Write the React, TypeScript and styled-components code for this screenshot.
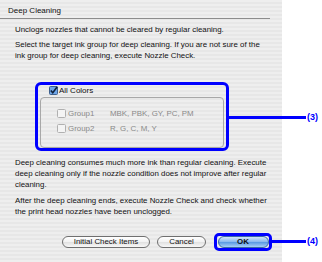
import styled, { createGlobalStyle } from "styled-components";

const GlobalStyle = createGlobalStyle`
    html, body {
        margin: 0;
        padding: 0;
        background: #ffffff;
    }
    body {
        font-family: "Liberation Sans", Arial, sans-serif;
    }
`;

const StyledPage = styled.div`
    position: relative;
    width: 322px;
    height: 262px;
    display: flex;
    background: #ffffff;
    overflow: hidden;
`;

const StyledDialog = styled.div`
    flex: 0 0 282px;
    height: 262px;
    background: repeating-linear-gradient(
        to bottom,
        #eeeeee 0px,
        #eeeeee 2px,
        #e7e7e7 2px,
        #e7e7e7 4px
    );
    color: #111;
    font-size: 7.9px;
`;

const StyledTitle = styled.div`
    height: 19px;
    margin-right: 12px;
    padding: 2px 0 0 8px;
    box-sizing: border-box;
    border-bottom: 1px solid #8c8c8c;
    display: flex;
    align-items: center;
    font-size: 8px;
`;

const StyledBody = styled.div`
    padding: 0 10px 0 15px;
`;

const StyledText = styled.p<{ $top: number }>`
    margin: ${(p) => p.$top}px 0 0 0;
    line-height: 11px;
    white-space: nowrap;
`;

const StyledHighlight = styled.div<{ $radius?: number }>`
    border: 3px solid #0000ff;
    border-radius: ${(p) => p.$radius ?? 6}px;
    box-sizing: border-box;
`;

const StyledColorBox = styled(StyledHighlight)`
    margin: 21px 0 0 20px;
    width: 194px;
    height: 69px;
    padding: 0 2px;
`;

const StyledAllRow = styled.div`
    display: flex;
    align-items: center;
    gap: 1px;
    padding-left: 9px;
    height: 11px;
    font-size: 8px;
`;

const StyledInnerGroup = styled.div`
    margin-top: 1px;
    height: 51px;
    border: 1px solid #a8a8a8;
    border-radius: 4px;
    box-sizing: border-box;
    padding: 11px 0 0 16px;
    display: flex;
    flex-direction: column;
    gap: 6px;
`;

const StyledGroupRow = styled.div`
    display: flex;
    align-items: center;
    height: 9px;
    color: #8a8a8a;
`;

const StyledGroupName = styled.span`
    width: 42px;
    margin-left: 2px;
`;

const StyledCallout = styled.div<{ $top: number; $left: number }>`
    position: absolute;
    top: ${(p) => p.$top}px;
    left: ${(p) => p.$left}px;
    height: 10px;
    display: flex;
    align-items: center;
    gap: 1px;
    color: #0000ff;
    font-family: "Liberation Sans", sans-serif;
    font-weight: bold;
    font-size: 9px;
`;

const StyledCalloutLine = styled.div<{ $width: number }>`
    width: ${(p) => p.$width}px;
    height: 3px;
    background: #0000ff;
`;

const StyledButtons = styled.div`
    margin-top: 16px;
    padding-left: 47px;
    display: flex;
    align-items: center;
`;

const StyledButton = styled.button<{ $primary?: boolean; $width: number; $gap?: number }>`
    flex: 0 0 auto;
    width: ${(p) => p.$width}px;
    height: 12px;
    margin-right: ${(p) => p.$gap ?? 0}px;
    padding: 0;
    border: 1px solid ${(p) => (p.$primary ? "#3b6aa3" : "#6f6f6f")};
    border-radius: 7px;
    font-family: inherit;
    font-size: 7.9px;
    font-weight: ${(p) => (p.$primary ? "bold" : "normal")};
    line-height: 10px;
    color: #111;
    background: ${(p) =>
        p.$primary
            ? "linear-gradient(to bottom, #d3e6fb 0%, #8fbcee 45%, #5d9ce3 55%, #a9d1f7 100%)"
            : "linear-gradient(to bottom, #ffffff 0%, #f3f3f3 45%, #e2e2e2 55%, #f8f8f8 100%)"};
`;

const StyledOkFrame = styled(StyledHighlight)`
    flex: 0 0 auto;
    height: 18px;
    width: 58px;
    display: flex;
    align-items: center;
    justify-content: center;
`;

function Checkbox({ checked, dim }: { checked?: boolean; dim?: boolean }) {
    return (
        <svg width="9" height="9" viewBox="0 0 9 9">
            <rect
                x="0.5"
                y="0.5"
                width="8"
                height="8"
                rx="1"
                fill={checked ? "#6fa6e8" : "#f4f4f4"}
                stroke={dim ? "#b0b0b0" : "#3d5f8c"}
            />
            {checked && (
                <path d="M1.8 4.4 L3.8 6.8 L8.2 0.8" fill="none" stroke="#10213a" strokeWidth="1.6" />
            )}
        </svg>
    );
}

function App() {
    return (
        <>
            <GlobalStyle />
            <StyledPage>
                <StyledDialog>
                    <StyledTitle>Deep Cleaning</StyledTitle>
                    <StyledBody>
                        <StyledText $top={5}>Unclogs nozzles that cannot be cleared by regular cleaning.</StyledText>
                        <StyledText $top={4}>
                            Select the target ink group for deep cleaning. If you are not sure of the
                            <br />
                            ink group for deep cleaning, execute Nozzle Check.
                        </StyledText>
                        <StyledColorBox>
                            <StyledAllRow>
                                <Checkbox checked />
                                All Colors
                            </StyledAllRow>
                            <StyledInnerGroup>
                                <StyledGroupRow>
                                    <Checkbox dim />
                                    <StyledGroupName>Group1</StyledGroupName>
                                    MBK, PBK, GY, PC, PM
                                </StyledGroupRow>
                                <StyledGroupRow>
                                    <Checkbox dim />
                                    <StyledGroupName>Group2</StyledGroupName>
                                    R, G, C, M, Y
                                </StyledGroupRow>
                            </StyledInnerGroup>
                        </StyledColorBox>
                        <StyledText $top={6}>
                            Deep cleaning consumes much more ink than regular cleaning. Execute
                            <br />
                            deep cleaning only if the nozzle condition does not improve after regular
                            <br />
                            cleaning.
                        </StyledText>
                        <StyledText $top={5}>
                            After the deep cleaning ends, execute Nozzle Check and check whether
                            <br />
                            the print head nozzles have been unclogged.
                        </StyledText>
                        <StyledButtons>
                            <StyledButton $width={88} $gap={7}>Initial Check Items</StyledButton>
                            <StyledButton $width={49} $gap={8}>Cancel</StyledButton>
                            <StyledOkFrame $radius={5}>
                                <StyledButton $primary $width={51}>OK</StyledButton>
                            </StyledOkFrame>
                        </StyledButtons>
                    </StyledBody>
                </StyledDialog>
                <StyledCallout $top={112} $left={229}>
                    <StyledCalloutLine $width={77} />
                    (3)
                </StyledCallout>
                <StyledCallout $top={236} $left={272}>
                    <StyledCalloutLine $width={34} />
                    (4)
                </StyledCallout>
            </StyledPage>
        </>
    );
}

export default App;
